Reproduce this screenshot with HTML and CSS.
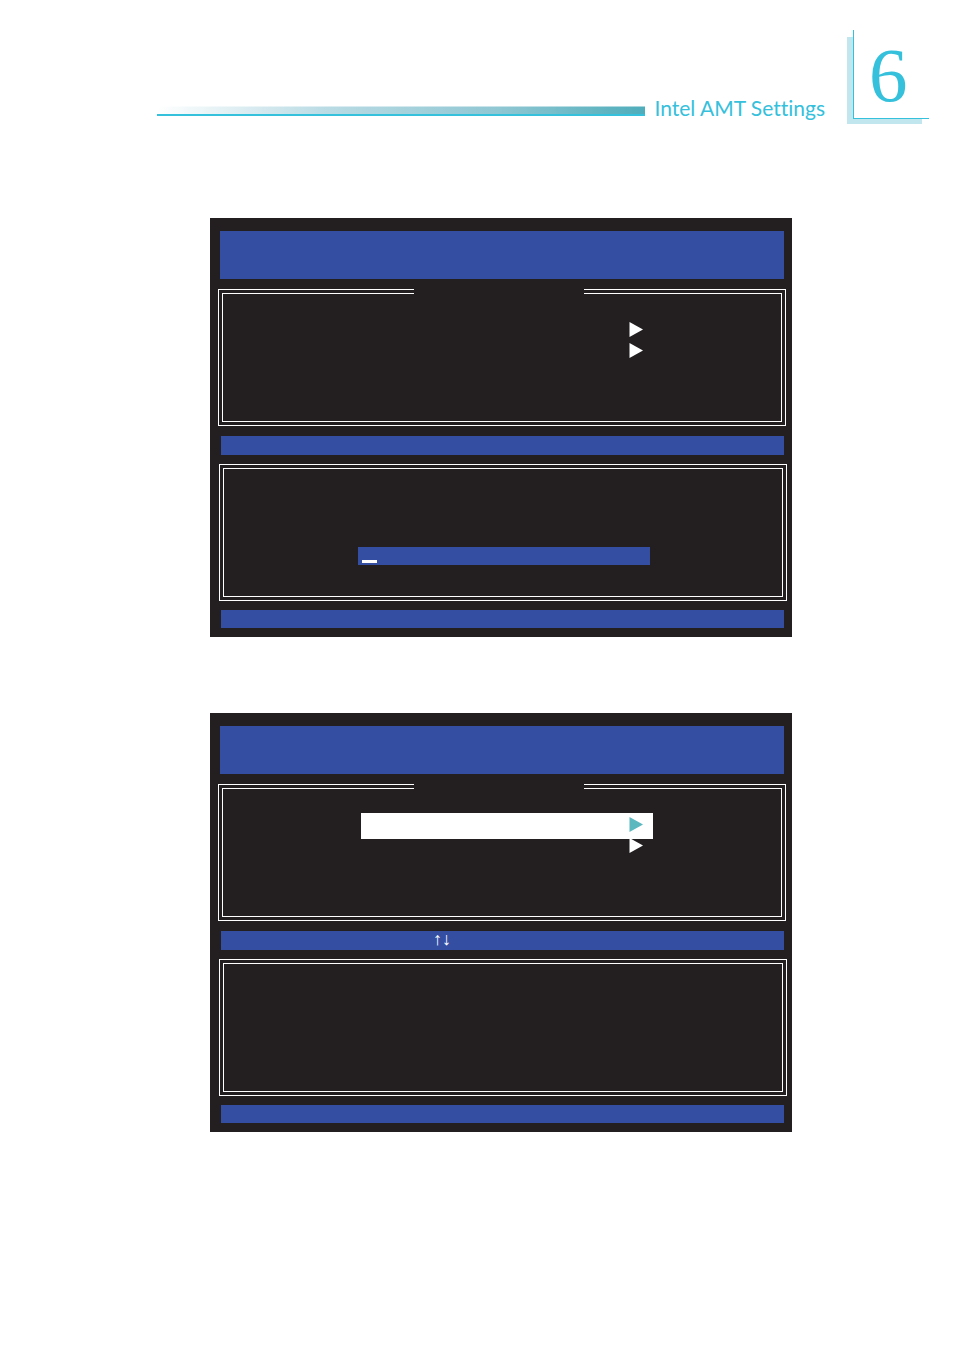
FILE: index.html
```html
<!DOCTYPE html>
<html lang="en">
<head>
  <meta charset="UTF-8">
  <title>Intel AMT Settings</title>
  <link rel="stylesheet" href="styles.css">
</head>
<body>

  <header class="page-header">
    <div class="rule"></div>
    <h1>Intel AMT Settings</h1>
    <div class="chapter"><span>6</span></div>
  </header>

  <main>
    <!-- password prompt -->
    <section class="screen">
      <div class="title-bar"></div>
      <div class="frame frame-menu">
        <ul class="menu">
          <li><button type="button" aria-label="Menu item 1"><svg width="14" height="15" viewBox="0 0 14 15"><path d="M0.5 0L14 7.5L0.5 15z"/></svg></button></li>
          <li><button type="button" aria-label="Menu item 2"><svg width="14" height="15" viewBox="0 0 14 15"><path d="M0.5 0L14 7.5L0.5 15z"/></svg></button></li>
        </ul>
      </div>
      <div class="key-bar"></div>
      <div class="frame frame-message">
        <div class="prompt">
          <input type="password" aria-label="Password">
          <span class="cursor"></span>
        </div>
      </div>
      <div class="status-bar"></div>
    </section>

    <!-- main menu -->
    <section class="screen">
      <div class="title-bar"></div>
      <div class="frame frame-menu">
        <ul class="menu">
          <li class="active"><button type="button" aria-label="Menu item 1"><svg width="14" height="15" viewBox="0 0 14 15"><path d="M0.5 0L14 7.5L0.5 15z"/></svg></button></li>
          <li><button type="button" aria-label="Menu item 2"><svg width="14" height="15" viewBox="0 0 14 15"><path d="M0.5 0L14 7.5L0.5 15z"/></svg></button></li>
        </ul>
      </div>
      <div class="key-bar">↑↓</div>
      <div class="frame frame-message"></div>
      <div class="status-bar"></div>
    </section>
  </main>

</body>
</html>
```
FILE: styles.css
```css
* {
  box-sizing: border-box;
}

body {
  margin: 0;
  background: #fff;
  font-family: Lato, "Liberation Sans", sans-serif;
}

/* header */
.page-header {
  display: flex;
  align-items: flex-start;
  padding: 30px 25px 0 157px;
}

.rule {
  flex: 1;
  height: 10px;
  margin-top: 76px;
  border-top: 1px solid rgba(255, 255, 255, 0.5);
  border-bottom: 2px solid #35c0dc;
  background: linear-gradient(to right, #fff, #b9dbe4 35%, #8fc7d3 70%, #4fadbb) border-box;
}

.page-header h1 {
  margin: 65px 0 0 9px;
  font-size: 21px;
  line-height: 26px;
  font-weight: normal;
  font-variant-ligatures: none;
  color: #35c0dc;
}

.chapter {
  position: relative;
  width: 76px;
  height: 89px;
  margin-left: 28px;
  border-left: 1px solid #35c0dc;
  border-bottom: 1px solid #35c0dc;
  background: #fff;
}

.chapter::before {
  content: "";
  position: absolute;
  z-index: -1;
  top: 7px;
  left: -7px;
  right: 7px;
  bottom: -6px;
  background: #c1e6ee;
}

.chapter span {
  display: block;
  height: 88px;
  padding-left: 15px;
  background: #fff;
  font-family: "Liberation Serif", serif;
  font-size: 77px;
  line-height: 90px;
  color: #35c0dc;
}

/* BIOS screens */
main {
  display: flex;
  flex-direction: column;
  gap: 76px;
  padding: 97px 162px 40px 210px;
}

.screen {
  padding: 13px 5px 9px 8px;
  background: #231f20;
}

.title-bar {
  height: 48px;
  margin: 0 3px 10px 2px;
  background: #344ea2;
}

.frame {
  position: relative;
  height: 137px;
  padding: 3px;
  border: 1px solid #fff;
}

.frame::after {
  content: "";
  position: absolute;
  inset: 3px;
  border: 1px solid #fff;
  pointer-events: none;
}

.frame-menu {
  margin-right: 1px;
  padding: 28px 132px 0 142px;
}

/* gap in the top line, where the menu title goes */
.frame-menu::before {
  content: "";
  position: absolute;
  z-index: 1;
  top: -1px;
  left: 195px;
  right: 201px;
  height: 5px;
  background: #231f20;
}

.frame-message {
  margin-left: 1px;
}

.menu {
  margin: 0;
  padding: 0;
  list-style: none;
}

.menu li {
  height: 21px;
}

.menu button {
  display: flex;
  justify-content: flex-end;
  align-items: flex-start;
  width: 100%;
  height: 26px;
  padding: 4px 10px 0 0;
  border: 0;
  background: none;
}

.menu svg {
  fill: #fff;
}

.menu .active button {
  background: #fff;
}

.menu .active svg {
  fill: #5bb8bf;
}

.key-bar {
  height: 19px;
  margin: 10px 3px 9px;
  padding-left: 212px;
  background: #344ea2;
  color: #fff;
  font-family: "Liberation Serif", serif;
  font-size: 18px;
  line-height: 17px;
}

.status-bar {
  height: 18px;
  margin: 9px 3px 0;
  background: #344ea2;
}

.prompt {
  position: relative;
  margin: 79px 133px 0 135px;
}

.prompt input {
  display: block;
  width: 100%;
  height: 18px;
  padding: 0 4px;
  border: 0;
  background: #344ea2;
  color: #fff;
}

.cursor {
  position: absolute;
  left: 4px;
  bottom: 2px;
  width: 15px;
  height: 3px;
  background: #fff;
}
```
